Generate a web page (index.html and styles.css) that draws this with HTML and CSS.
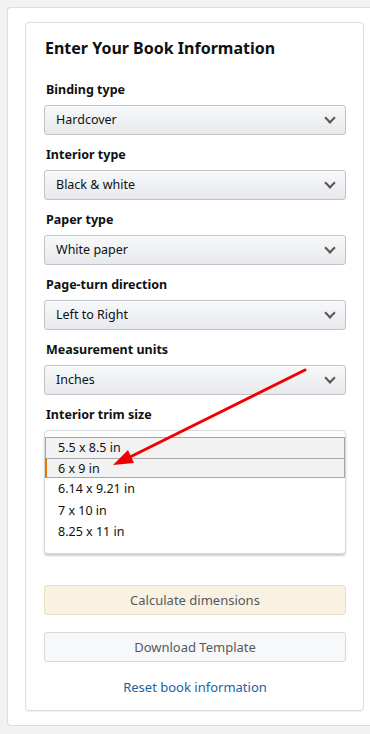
FILE: index.html
```html
<!DOCTYPE html>
<html lang="en">
<head>
    <meta charset="UTF-8">
    <title>Enter Your Book Information</title>
    <link rel="stylesheet" href="styles.css">
</head>
<body>
    <div class="page">
        <div class="card">
            <h2 class="title">Enter Your Book Information</h2>

            <div class="field">
                <label class="label">Binding type</label>
                <div class="select">Hardcover<span class="chev"></span></div>
            </div>

            <div class="field">
                <label class="label">Interior type</label>
                <div class="select">Black &amp; white<span class="chev"></span></div>
            </div>

            <div class="field">
                <label class="label">Paper type</label>
                <div class="select">White paper<span class="chev"></span></div>
            </div>

            <div class="field">
                <label class="label">Page-turn direction</label>
                <div class="select">Left to Right<span class="chev"></span></div>
            </div>

            <div class="field">
                <label class="label">Measurement units</label>
                <div class="select">Inches<span class="chev"></span></div>
            </div>

            <div class="field">
                <label class="label">Interior trim size</label>
                <div class="listbox">
                    <div class="opt hover">5.5 x 8.5 in</div>
                    <div class="opt active">6 x 9 in</div>
                    <div class="opt">6.14 x 9.21 in</div>
                    <div class="opt">7 x 10 in</div>
                    <div class="opt">8.25 x 11 in</div>
                </div>
            </div>

            <button class="btn btn-calc">Calculate dimensions</button>
            <button class="btn">Download Template</button>
            <a class="reset" href="#">Reset book information</a>

            <!-- annotation arrow -->
            <svg class="arrow" width="370" height="734" viewBox="0 0 370 734">
                <line x1="305" y1="370" x2="124" y2="460" stroke="#f00000" stroke-width="3" stroke-linecap="round"/>
                <polygon points="113,465 128,450 134,463" fill="#f00000"/>
            </svg>
        </div>
    </div>
</body>
</html>
```

FILE: styles.css
```css
body {
    margin: 0;
    background-color: #f2f2f2;
    font-family: "Noto Sans", "Open Sans", sans-serif;
    color: #0f1111;
    overflow: hidden;
}

.page {
    margin: 7px 0 0 7px;
    padding: 14px 0 14px 17px;
    background-color: #fff;
    border: 1px solid #dddddd;
    border-right: none;
    border-radius: 4px 0 0 4px;
}

.card {
    width: 302px;
    padding: 13px 17px 12px 18px;
    border: 1px solid #dcdcdc;
    border-radius: 4px;
    box-shadow: 0 1px 1px rgba(0, 0, 0, 0.06);
}

.title {
    margin: 0 0 20px 1px;
    font-size: 16px;
    line-height: 24px;
    font-weight: 700;
}

.field {
    margin-bottom: 10px;
}

.label {
    display: block;
    margin: 0 0 6px 2px;
    font-size: 12.5px;
    line-height: 19px;
    font-weight: 700;
}

.select {
    position: relative;
    height: 28px;
    padding-left: 11px;
    border: 1px solid #c0c3c8;
    border-radius: 3px;
    background: linear-gradient(#f7f8fa, #e7e9ec);
    box-shadow: 0 1px 0 rgba(255, 255, 255, 0.6) inset;
    font-size: 12.5px;
    line-height: 28px;
}

.chev {
    position: absolute;
    right: 11px;
    top: 8px;
    width: 6px;
    height: 6px;
    border-right: 2px solid #555;
    border-bottom: 2px solid #555;
    transform: rotate(45deg);
}

.listbox {
    padding: 6px 0 11px 0;
    border: 1px solid #d5d9d9;
    border-radius: 4px;
    box-shadow: 0 2px 2px rgba(0, 0, 0, 0.2);
}

.opt {
    height: 21px;
    padding-left: 13px;
    font-size: 12.5px;
    line-height: 21px;
    box-sizing: border-box;
}

.opt.hover {
    background-color: #f2f2f2;
    border: 1px solid #a6a6a6;
    border-bottom: none;
    padding-left: 12px;
    line-height: 20px;
}

.opt.active {
    background-color: #f2f2f2;
    border: 1px solid #a6a6a6;
    border-left: 2px solid #e77600;
    padding-left: 11px;
    line-height: 19px;
    height: 20px;
}

.opt.active + .opt {
    height: 22px;
    line-height: 22px;
}

.btn {
    display: block;
    width: 100%;
    height: 30px;
    margin-top: 17px;
    border: 1px solid #d5d9d9;
    border-radius: 3px;
    background-color: #f7f8fa;
    color: #565959;
    font-family: inherit;
    font-size: 13px;
}

.btn-calc {
    margin-top: 31px;
    background-color: #f9f1e2;
    border-color: #eadfc6;
}

.reset {
    display: block;
    margin-top: 14px;
    text-align: center;
    font-size: 13px;
    line-height: 22px;
    color: #2162a1;
    text-decoration: none;
}

.arrow {
    position: absolute;
    left: 0;
    top: 0;
    pointer-events: none;
}
```
